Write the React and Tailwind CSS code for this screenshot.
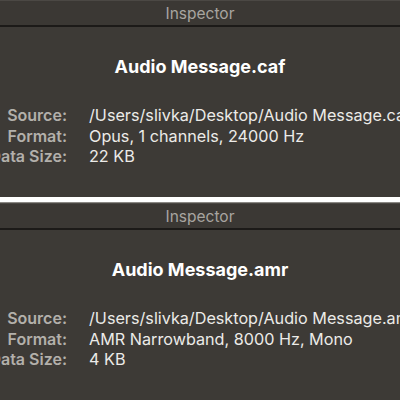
const panels = [
  {
    name: 'Audio Message.caf',
    rows: [
      ['Source:', '/Users/slivka/Desktop/Audio Message.caf'],
      ['Format:', 'Opus, 1 channels, 24000 Hz'],
      ['Data Size:', '22 KB'],
    ],
  },
  {
    name: 'Audio Message.amr',
    rows: [
      ['Source:', '/Users/slivka/Desktop/Audio Message.amr'],
      ['Format:', 'AMR Narrowband, 8000 Hz, Mono'],
      ['Data Size:', '4 KB'],
    ],
  },
];

const Panel = ({ name, rows }) => (
  <div className="h-[197px] flex flex-col overflow-hidden bg-[#3d3a36]">
    <div className="h-[25px] shrink-0 flex items-center justify-center border-t border-[#4b4844] bg-[#3b3834] pt-[2px] text-[15.5px] text-[#a8a5a0]">
      Inspector
    </div>
    <div className="h-[2px] shrink-0 bg-[#1c1a18]" />
    <div className="pt-[29px] text-center text-[18px] font-bold text-white leading-[22px]">
      {name}
    </div>
    <div className="mt-[27px] flex flex-col">
      {rows.map(([label, value]) => (
        <div key={label} className="flex items-center h-[20.5px] whitespace-nowrap">
          <div className="w-[67px] shrink-0 flex justify-end text-[16px] font-semibold text-[#b3b0ab]">
            {label}
          </div>
          <div className="ml-[22px] text-[16.2px] text-[#ecebe8]">{value}</div>
        </div>
      ))}
    </div>
  </div>
);

export default function App() {
  return (
    <div className="w-[400px] h-[400px] flex flex-col bg-white font-['Inter',sans-serif] overflow-hidden">
      <Panel {...panels[0]} />
      <div className="h-[5px] shrink-0 bg-white" />
      <div className="h-[1px] shrink-0 bg-[#8a8884]" />
      <Panel {...panels[1]} />
    </div>
  );
}
